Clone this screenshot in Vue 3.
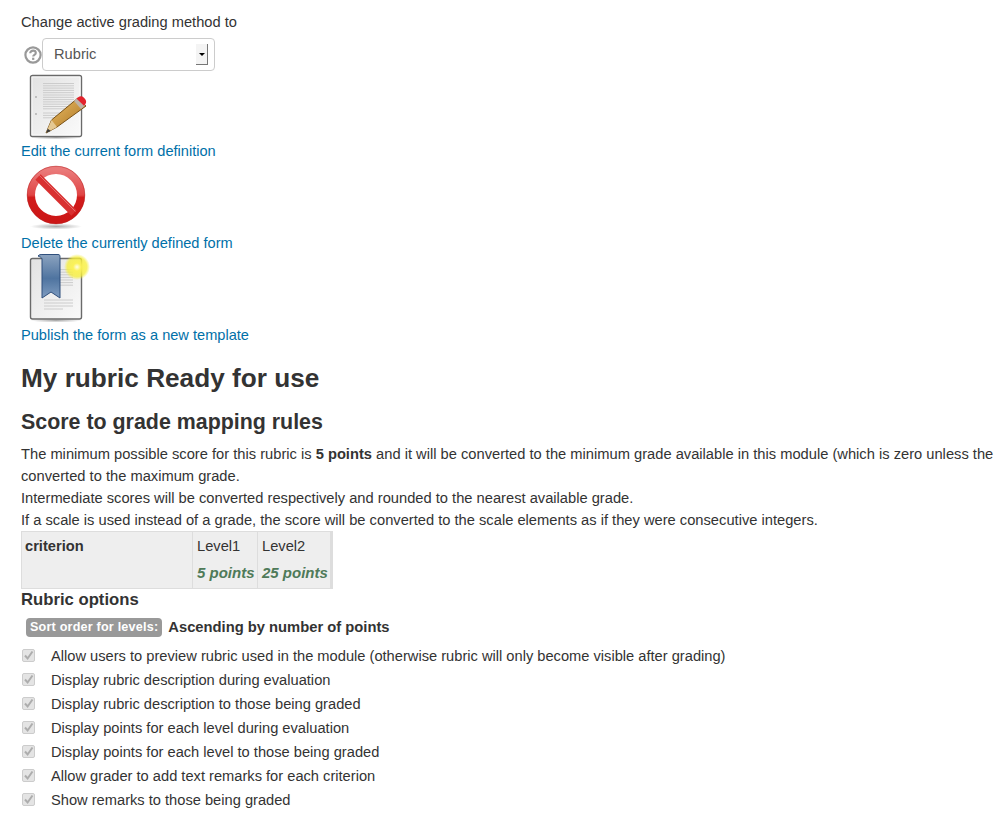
<script setup>
const options = [
  'Allow users to preview rubric used in the module (otherwise rubric will only become visible after grading)',
  'Display rubric description during evaluation',
  'Display rubric description to those being graded',
  'Display points for each level during evaluation',
  'Display points for each level to those being graded',
  'Allow grader to add text remarks for each criterion',
  'Show remarks to those being graded'
];
const docLines = [0, 1, 2, 3, 4, 5, 6, 7, 8, 9, 10, 11];
</script>

<template>
  <div class="page">
    <div class="method-label">Change active grading method to</div>
    <div class="method-row">
      <svg class="help" width="18" height="18" viewBox="0 0 18 18">
        <circle cx="9" cy="9" r="7.6" fill="#fff" stroke="#999" stroke-width="2.2" />
        <path d="M6.2 7.2c0-1.700 1.300-2.600 2.900-2.600s2.700.9 2.700 2.300c0 1.900-2.600 1.900-2.600 3.500" fill="none" stroke="#999" stroke-width="2.1" />
        <rect x="8.1" y="11.7" width="2.2" height="2.2" fill="#999" />
      </svg>
      <div class="select">
        <span class="select-text">Rubric</span>
        <span class="select-btn"><i></i></span>
      </div>
    </div>

    <a class="action">
      <svg class="icon" width="64" height="64" viewBox="0 0 64 64">
        <defs>
          <linearGradient id="paper" x1="0" y1="0" x2="1" y2="1">
            <stop offset="0" stop-color="#e2e2e2" />
            <stop offset="1" stop-color="#fafafa" />
          </linearGradient>
          <linearGradient id="wood" x1="0" y1="0" x2="1" y2="1">
            <stop offset="0" stop-color="#f0c26c" />
            <stop offset="1" stop-color="#a66f1c" />
          </linearGradient>
          <radialGradient id="shadow">
            <stop offset="0" stop-color="#888" stop-opacity=".7" />
            <stop offset="1" stop-color="#888" stop-opacity="0" />
          </radialGradient>
        </defs>
        <ellipse cx="35" cy="62.500" rx="26" ry="2" fill="url(#shadow)" />
        <rect x="9.500" y=".5" width="51" height="61" rx="2" fill="url(#paper)" stroke="#6a6a6a" stroke-width="1.4" />
        <rect x="11" y="2" width="48" height="58" fill="none" stroke="#fff" stroke-opacity=".7" />
        <g stroke="#ccc" stroke-width="1">
          <line v-for="n in docLines" :key="n" x1="22" x2="53" :y1="8.5 + n * 2.3" :y2="8.5 + n * 2.3" />
          <line x1="22" x2="46" y1="38" y2="38" />
          <line x1="22" x2="46" y1="40.4" y2="40.4" />
          <line x1="22" x2="38" y1="42.8" y2="42.8" />
        </g>
        <circle cx="15" cy="22" r=".9" fill="#aaa" />
        <circle cx="15" cy="39" r=".9" fill="#aaa" />
        <path d="M25 58l5.500-13L57 23l8 8-29 21z" fill="url(#wood)" stroke="#7a5216" stroke-width="1" />
        <path d="M25 58l5.500-13 5.500 7z" fill="#e4c893" />
        <path d="M25 58l1.800-4.300 3 2.200z" fill="#3a3a3a" />
        <path d="M53 26l4.500-4 7 8-4.500 4z" fill="#bdb3a8" />
        <path d="M57 22.500c2-1.600 4-1.600 6 .2 2.400 2.200 2.800 4.400 1.200 6.800l-1.200 1.200-7.600-7.200z" fill="#e3232c" />
      </svg>
      <span>Edit the current form definition</span>
    </a>

    <a class="action">
      <svg class="icon" width="64" height="64" viewBox="0 0 64 64">
        <defs>
          <linearGradient id="red" x1="0" y1="0" x2="0" y2="1">
            <stop offset="0" stop-color="#ea7a7a" />
            <stop offset=".5" stop-color="#e04545" />
            <stop offset=".55" stop-color="#d11c1c" />
            <stop offset="1" stop-color="#cc1616" />
          </linearGradient>
        </defs>
        <ellipse cx="35" cy="59.500" rx="26" ry="3" fill="url(#shadow)" />
        <circle cx="35" cy="28" r="25" fill="#fff" stroke="url(#red)" stroke-width="8" />
        <circle cx="35" cy="28" r="28.800" fill="none" stroke="#b52020" stroke-width=".5" />
        <path d="M17 10l36 36" stroke="#d93030" stroke-width="7.5" />
        <path d="M18.500 8.500l36 36" stroke="#f0b0b0" stroke-opacity=".6" stroke-width=".8" />
      </svg>
      <span>Delete the currently defined form</span>
    </a>

    <a class="action">
      <svg class="icon" width="64" height="64" viewBox="0 0 64 64">
        <defs>
          <linearGradient id="ribbon" x1="0" y1="0" x2="0" y2="1">
            <stop offset="0" stop-color="#8ca3bf" />
            <stop offset=".55" stop-color="#4f74a0" />
            <stop offset="1" stop-color="#7f9cc0" />
          </linearGradient>
          <radialGradient id="glow">
            <stop offset="0" stop-color="#fffde8" />
            <stop offset=".3" stop-color="#fbf25a" />
            <stop offset=".75" stop-color="#f6ee36" stop-opacity=".75" />
            <stop offset="1" stop-color="#f6ee36" stop-opacity="0" />
          </radialGradient>
        </defs>
        <ellipse cx="35" cy="61.500" rx="26" ry="2" fill="url(#shadow)" />
        <rect x="9.500" y="-.5" width="51" height="60.500" rx="2" fill="url(#paper)" stroke="#6a6a6a" stroke-width="1.4" />
        <g stroke="#ccc" stroke-width="1">
          <line v-for="n in 7" :key="n" x1="39" x2="52" :y1="8 + n * 2.6" :y2="8 + n * 2.6" />
          <line x1="23" x2="52" y1="41" y2="41" />
          <line x1="23" x2="52" y1="44" y2="44" />
          <line x1="23" x2="52" y1="47" y2="47" />
          <line x1="23" x2="42" y1="50" y2="50" />
        </g>
        <path d="M17-3c1-1.500 3-1.500 4-1.500h16c2 0 2 1 2 3V39l-9-6-9 6V0c0-1.500-2-2-4-3z" fill="url(#ribbon)" stroke="#2f4f7c" stroke-width="1" />
        <circle cx="56" cy="8" r="13" fill="url(#glow)" />
      </svg>
      <span>Publish the form as a new template</span>
    </a>

    <h2>My rubric Ready for use</h2>
    <h3>Score to grade mapping rules</h3>
    <p class="rules">
      The minimum possible score for this rubric is <b>5 points</b> and it will be converted to the minimum grade available in this module (which is zero unless the<br />
      converted to the maximum grade.<br />
      Intermediate scores will be converted respectively and rounded to the nearest available grade.<br />
      If a scale is used instead of a grade, the score will be converted to the scale elements as if they were consecutive integers.
    </p>

    <div class="rubric">
      <div class="criterion">criterion</div>
      <div class="level">
        <div class="level-name">Level1</div>
        <div class="level-score">5 points</div>
      </div>
      <div class="level">
        <div class="level-name">Level2</div>
        <div class="level-score">25 points</div>
      </div>
    </div>

    <h4>Rubric options</h4>
    <div class="sort">
      <span class="badge">Sort order for levels:</span>
      <b>Ascending by number of points</b>
    </div>

    <label v-for="opt in options" :key="opt" class="option">
      <span class="check">
        <svg width="13" height="13" viewBox="0 0 13 13">
          <path d="M3 6.500l2.600 3L10.500 2.500" fill="none" stroke="#adadad" stroke-width="2" />
        </svg>
      </span>
      <span>{{ opt }}</span>
    </label>
  </div>
</template>

<style scoped>
.page {
  width: 975px;
  height: 824px;
  overflow: hidden;
  padding-left: 21px;
  font-family: "Liberation Sans", Arial, sans-serif;
  font-size: 14.66px;
  line-height: 20px;
  color: #333;
}

.method-label {
  padding-top: 12px;
  height: 38px;
  box-sizing: border-box;
}

.method-row {
  display: flex;
  align-items: center;
  height: 33px;
}

.help {
  margin-left: 3px;
  margin-top: 1px;
}

.select {
  width: 173px;
  height: 33px;
  box-sizing: border-box;
  border: 1px solid #ccc;
  border-radius: 4px;
  padding-left: 11px;
  color: #555;
  display: flex;
  align-items: center;
  justify-content: space-between;
}

.select-text {
  margin-top: -2px;
}

.select-btn {
  width: 12px;
  height: 21px;
  margin-right: 6px;
  background: #f4f4f4;
  border-right: 1px solid #777;
  border-bottom: 1px solid #777;
  box-sizing: border-box;
  display: flex;
  align-items: center;
  justify-content: center;
}

.select-btn i {
  border-left: 3px solid transparent;
  border-right: 3px solid transparent;
  border-top: 3px solid #000;
}

.action {
  display: block;
  color: #0070a8;
  margin-top: 6px;
  font-size: 14.6px;
}

.action:first-of-type {
  margin-top: 4px;
}

.action .icon {
  display: block;
  overflow: visible;
  margin-bottom: 2px;
}

.action span {
  display: block;
}

h2 {
  margin: 0;
  padding-top: 13px;
  font-size: 26.2px;
  line-height: 40px;
  font-weight: bold;
}

h3 {
  margin: 0;
  padding-top: 4px;
  font-size: 21.4px;
  line-height: 40px;
  font-weight: bold;
}

.rules {
  margin: 0;
  padding-top: 1px;
  font-size: 14.7px;
  line-height: 22px;
  white-space: nowrap;
}

.rubric {
  display: grid;
  grid-template-columns: 170px 65px 73px;
  width: 312px;
  height: 58px;
  box-sizing: border-box;
  background: #eee;
  border: 1px solid #ddd;
  border-right-width: 3px;
}

.criterion {
  font-weight: bold;
  padding: 4px 3px;
}

.level {
  border-left: 1px solid #ddd;
  padding: 4px 0 0 4px;
}

.level-score {
  margin-top: 7px;
  font-style: italic;
  font-weight: bold;
  font-size: 15px;
  color: #4f7a59;
  white-space: nowrap;
}

h4 {
  margin: 0;
  padding-top: 1px;
  font-size: 16.7px;
  line-height: 20px;
  font-weight: bold;
}

.sort {
  display: flex;
  align-items: center;
  padding-left: 5px;
  height: 34px;
  gap: 6px;
  font-size: 14.75px;
}

.badge {
  background: #999;
  color: #fff;
  border-radius: 4px;
  font-size: 12.6px;
  font-weight: bold;
  line-height: 14px;
  padding: 2px 4px 3px;
  letter-spacing: 0.2px;
}

.option {
  display: flex;
  align-items: center;
  height: 24px;
}

.check {
  width: 13px;
  height: 13px;
  box-sizing: border-box;
  background: #e4e4e4;
  border: 1px solid #ccc;
  border-radius: 2px;
  margin-left: 1px;
  margin-right: 16px;
  margin-top: -2px;
  display: flex;
  align-items: center;
  justify-content: center;
}

.check svg {
  flex: none;
}
</style>
